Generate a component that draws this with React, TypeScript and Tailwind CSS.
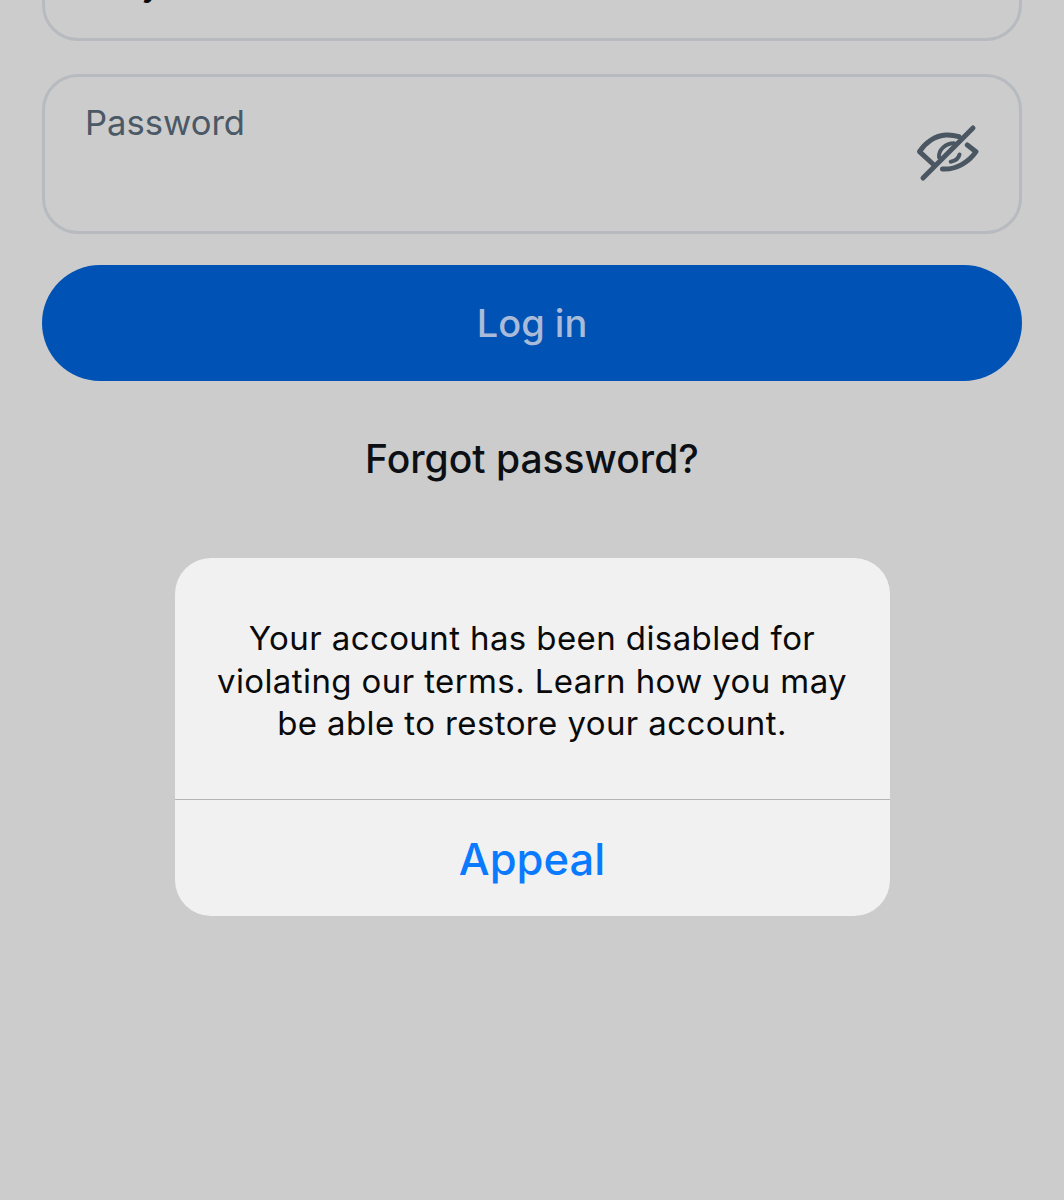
const App = () => {
  return (
    <div className="h-[1200px] overflow-hidden bg-[#cccccc] px-[42px] font-['Inter',sans-serif]">
      {/* Username field, mostly scrolled off */}
      <div className="-mt-[119px] h-[160px] rounded-[36px] border-[3px] border-[#b7babf] pl-[96px] pt-[74px] text-[38px] leading-[46px] text-[#0a0a0a]">
        y
      </div>

      {/* Password field */}
      <div className="mt-[33px] flex h-[160px] justify-between rounded-[36px] border-[3px] border-[#b7babf] pl-[40px] pr-[40px]">
        <span className="mt-[24px] text-[34.6px] leading-[42px] text-[#4b5866]">Password</span>
        <svg
          className="mt-[44px]"
          width="64"
          height="64"
          viewBox="0 0 64 64"
          fill="none"
          stroke="#4b5663"
          strokeWidth="5"
          strokeLinecap="round"
          strokeLinejoin="round"
        >
          <path d="M19 44 L4.5 30.7 C10 22 20 14.5 31 14 C36 13.8 40 14.5 44 15.7" />
          <path d="M52.3 24 L61 30.7 C54 41 41 49 27.5 48" />
          <path d="M24 36 C23.5 29 30 22.5 39 22.3" strokeWidth="4" />
          <path d="M35.7 40.7 C40 40 43.5 37.5 44.5 33.5" strokeWidth="4" />
          <path d="M8 57 L58 7" />
        </svg>
      </div>

      {/* Log in button */}
      <button className="mt-[31px] flex h-[116px] w-full items-center justify-center rounded-full bg-[#0052b4] text-[38px] font-medium text-[#a9bbd8]">
        Log in
      </button>

      <p className="mt-[55px] text-center text-[39px] leading-[46px] font-medium text-[#0c1014]">
        Forgot password?
      </p>

      {/* Alert */}
      <div className="mx-auto mt-[76px] w-[715px] overflow-hidden rounded-[36px] bg-[#f1f1f1]">
        <div className="flex h-[241px] flex-col items-center justify-center pt-[5px] text-center text-[33px] leading-[42.5px] tracking-[0.4px] text-[#0a0a0a]">
          <p>Your account has been disabled for</p>
          <p>violating our terms. Learn how you may</p>
          <p>be able to restore your account.</p>
        </div>
        <div className="flex h-[117px] items-center justify-center border-t border-[#b5b5b5] pt-[3px] text-[43.5px] font-[550] text-[#0a7aff]">
          Appeal
        </div>
      </div>
    </div>
  )
}

export default App
